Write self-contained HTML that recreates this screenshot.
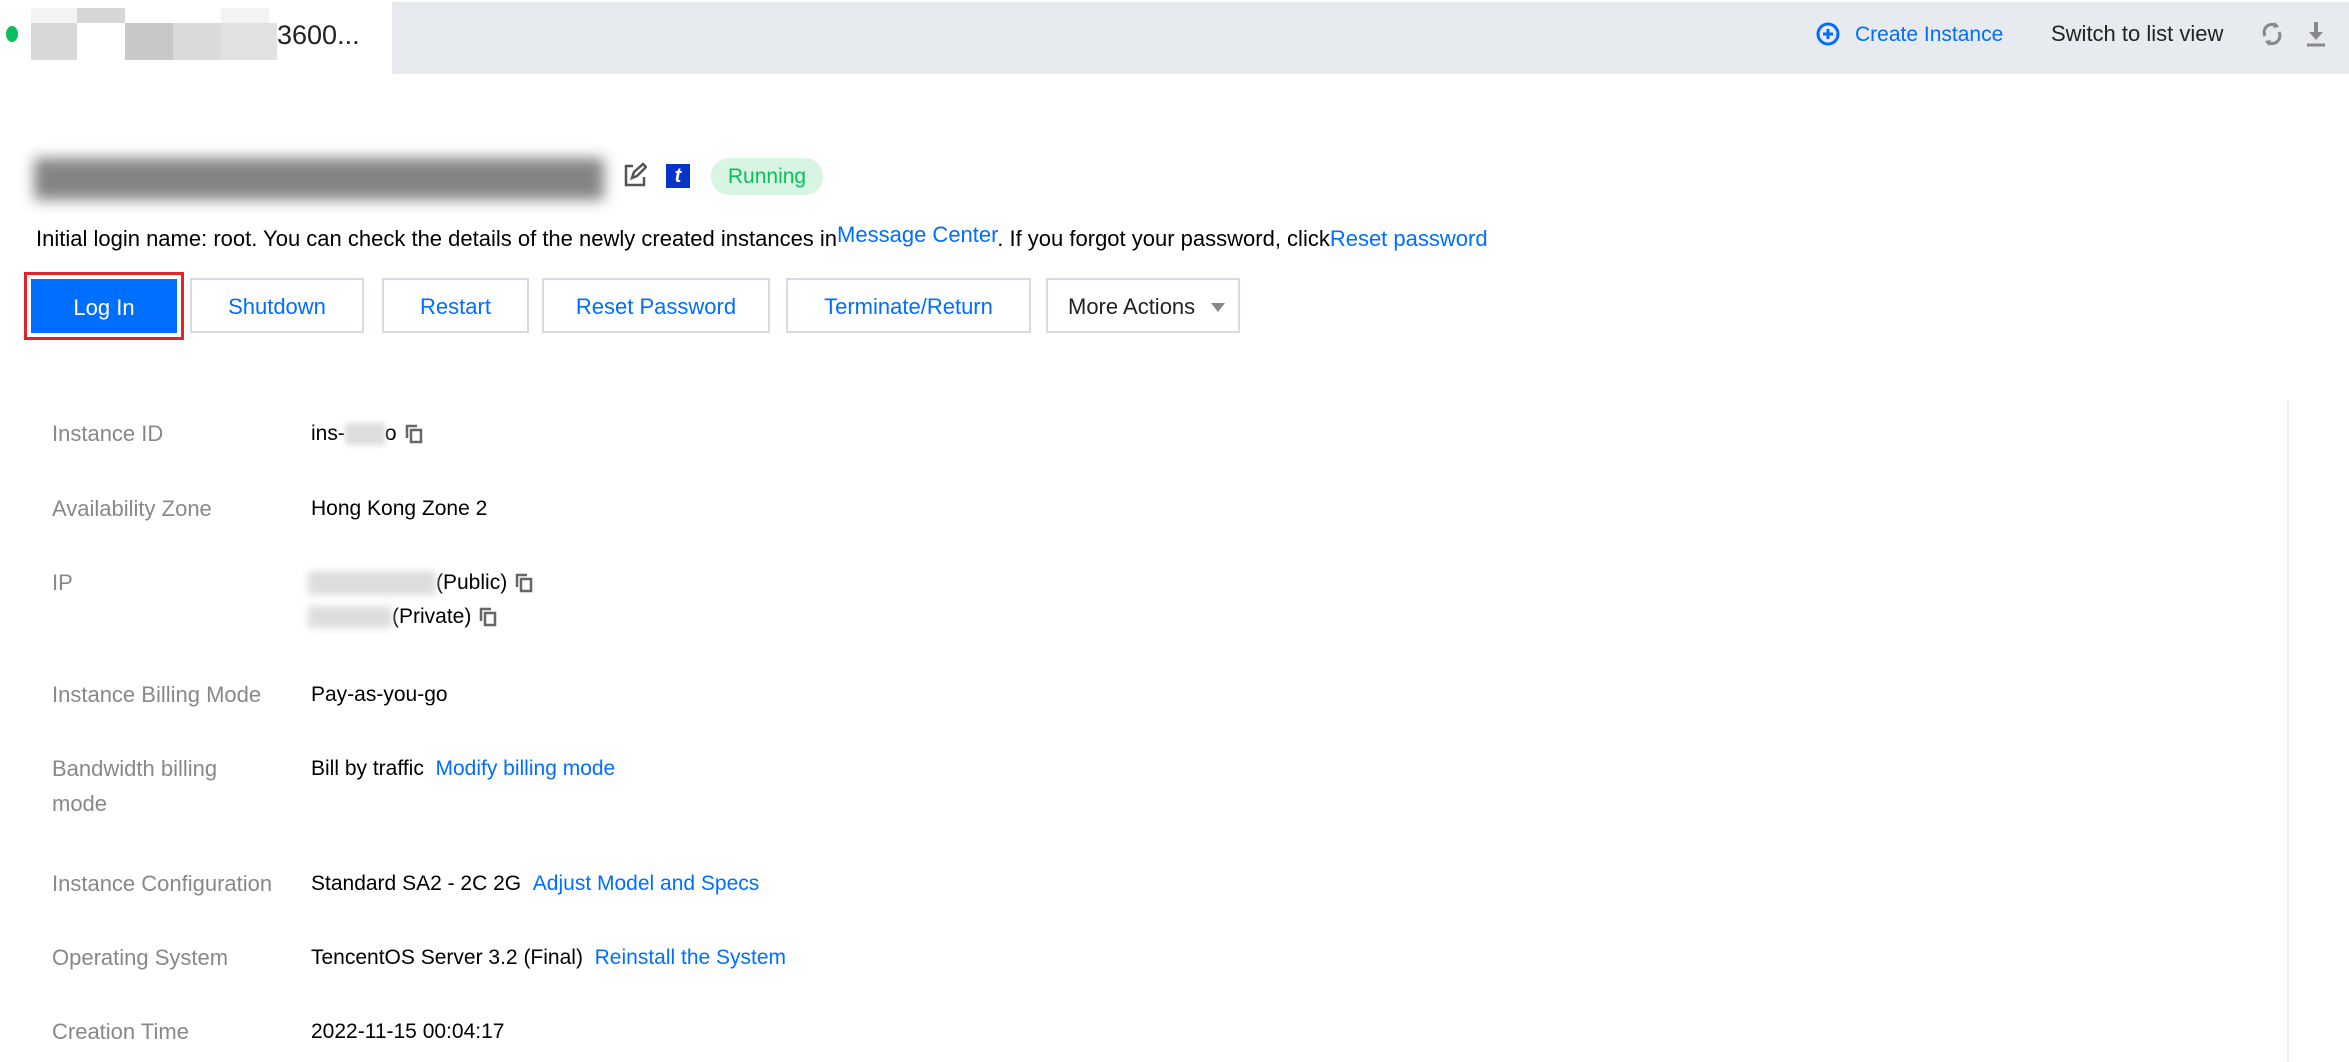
<!DOCTYPE html>
<html><head><meta charset="utf-8"><style>
*{margin:0;padding:0;box-sizing:border-box}
body{width:2349px;height:1062px;background:#fff;font-family:"Liberation Sans","Noto Sans CJK SC",sans-serif;position:relative;overflow:hidden;color:#000}
.a{position:absolute;white-space:nowrap}
.bar{left:392px;top:2px;right:0;height:72px;background:#e7eaef}
.btn{position:absolute;top:278px;height:55px;border:2px solid #d6dbe3;background:#fff;color:#006eff;font-size:22px;display:flex;align-items:center;justify-content:center;padding-top:3px}
.lab{color:#888;font-size:22px;left:52px}
.val{font-size:21px;left:311px;color:#000}
.lk{color:#006eff}
.cp{display:inline-block;vertical-align:middle;margin-left:8px}
</style></head><body>
<div class="a bar"></div>
<div class="a" style="left:6px;top:26px;width:12px;height:16px;border-radius:50%;background:#0abf5b"></div>
<div class="a" style="left:31px;top:8px;width:46px;height:15px;background:#f3f3f3"></div>
<div class="a" style="left:77px;top:8px;width:48px;height:15px;background:#d6d6d6"></div>
<div class="a" style="left:221px;top:8px;width:48px;height:15px;background:#f3f3f3"></div>
<div class="a" style="left:31px;top:23px;width:46px;height:37px;background:#d8d8d8"></div>
<div class="a" style="left:125px;top:23px;width:48px;height:37px;background:#c8c8c8"></div>
<div class="a" style="left:173px;top:23px;width:48px;height:37px;background:#dadada"></div>
<div class="a" style="left:221px;top:23px;width:56px;height:37px;background:#e2e2e2"></div>
<div class="a" style="left:277px;top:20px;font-size:27px;color:#222">3600...</div>
<svg class="a" style="left:1816px;top:22px" width="24" height="24" viewBox="0 0 24 24"><circle cx="12" cy="12" r="10" fill="none" stroke="#006eff" stroke-width="3"/><path d="M12 7v10M7 12h10" stroke="#006eff" stroke-width="3"/></svg>
<div class="a" style="left:1855px;top:23px;font-size:21px;color:#006eff">Create Instance</div>
<div class="a" style="left:2051px;top:21px;font-size:22px;color:#222">Switch to list view</div>
<svg class="a" style="left:2260px;top:20px" width="24" height="28" viewBox="0 0 24 28"><path d="M5 16a8 8 0 0 1 12-10M19 12a8 8 0 0 1-12 10" fill="none" stroke="#888" stroke-width="3"/><path d="M15 2l4 5-6 1zM9 26l-4-5 6-1z" fill="#888"/></svg>
<svg class="a" style="left:2305px;top:20px" width="22" height="28" viewBox="0 0 22 28"><path d="M11 2v14" stroke="#888" stroke-width="4"/><path d="M4 12l7 8 7-8z" fill="#888"/><path d="M2 25h18" stroke="#888" stroke-width="3"/></svg>
<div class="a" style="left:34px;top:158px;width:570px;height:42px;background:#666;filter:blur(7px);opacity:.8"></div>
<svg class="a" style="left:623px;top:162px" width="24" height="26" viewBox="0 0 24 26"><path d="M10 4H3v19h18v-8" fill="none" stroke="#555" stroke-width="2.5"/><path d="M9 16l2-6 9-8 3 3-9 9z" fill="none" stroke="#555" stroke-width="2.5"/></svg>
<div class="a" style="left:666px;top:164px;width:24px;height:24px;background:#0a33c8;color:#fff;font-style:italic;font-weight:bold;font-size:20px;text-align:center;line-height:24px">t</div>
<div class="a" style="left:711px;top:158px;width:112px;height:37px;border-radius:18px;background:#d7f5e2;color:#0abf5b;font-size:21px;text-align:center;line-height:37px">Running</div>
<div class="a" style="left:36px;top:226px;font-size:22px">Initial login name: root. You can check the details of the newly created instances in<span class="lk" style="position:relative;top:-4px">Message Center</span>. If you forgot your password, click<span class="lk">Reset password</span></div>
<div class="a" style="left:24px;top:272px;width:160px;height:68px;border:3px solid #e1242a"></div>
<div class="btn" style="left:31px;width:146px;background:#006eff;border-color:#006eff;color:#fff;top:279px;height:54px">Log In</div>
<div class="btn" style="left:190px;width:174px">Shutdown</div>
<div class="btn" style="left:382px;width:147px">Restart</div>
<div class="btn" style="left:542px;width:228px">Reset Password</div>
<div class="btn" style="left:786px;width:245px">Terminate/Return</div>
<div class="btn" style="left:1046px;width:194px;color:#222;justify-content:flex-start;padding-left:20px">More Actions<span style="margin-left:16px;border:7px solid transparent;border-top:9px solid #888;margin-top:8px"></span></div>
<div class="a" style="left:2287px;top:400px;width:2px;height:662px;background:#eee"></div>
<div class="a lab" style="top:421px">Instance ID</div>
<div class="a val" style="top:422px">ins-<span style="display:inline-block;width:40px;height:22px;background:#ddd;filter:blur(3px);vertical-align:middle"></span>o<svg class="cp" width="18" height="20" viewBox="0 0 18 20"><path d="M2 14V2h10" fill="none" stroke="#666" stroke-width="2.5"/><rect x="6" y="6" width="10" height="12" fill="none" stroke="#666" stroke-width="2.5"/></svg></div>
<div class="a lab" style="top:496px">Availability Zone</div><div class="a val" style="top:497px">Hong Kong Zone 2</div>
<div class="a lab" style="top:570px">IP</div>
<div class="a val" style="top:571px;left:308px"><span style="display:inline-block;width:128px;height:24px;background:#ddd;filter:blur(4px);vertical-align:middle"></span>(Public)<svg class="cp" width="18" height="20" viewBox="0 0 18 20"><path d="M2 14V2h10" fill="none" stroke="#666" stroke-width="2.5"/><rect x="6" y="6" width="10" height="12" fill="none" stroke="#666" stroke-width="2.5"/></svg></div>
<div class="a val" style="top:605px;left:308px"><span style="display:inline-block;width:84px;height:22px;background:#ddd;filter:blur(4px);vertical-align:middle"></span>(Private)<svg class="cp" width="18" height="20" viewBox="0 0 18 20"><path d="M2 14V2h10" fill="none" stroke="#666" stroke-width="2.5"/><rect x="6" y="6" width="10" height="12" fill="none" stroke="#666" stroke-width="2.5"/></svg></div>
<div class="a lab" style="top:682px">Instance Billing Mode</div><div class="a val" style="top:683px">Pay-as-you-go</div>
<div class="a lab" style="top:756px">Bandwidth billing</div><div class="a lab" style="top:791px">mode</div>
<div class="a val" style="top:757px">Bill by traffic&nbsp;&nbsp;<span class="lk">Modify billing mode</span></div>
<div class="a lab" style="top:871px">Instance Configuration</div><div class="a val" style="top:872px">Standard SA2 - 2C 2G&nbsp;&nbsp;<span class="lk">Adjust Model and Specs</span></div>
<div class="a lab" style="top:945px">Operating System</div><div class="a val" style="top:946px">TencentOS Server 3.2 (Final)&nbsp;&nbsp;<span class="lk">Reinstall the System</span></div>
<div class="a lab" style="top:1019px">Creation Time</div><div class="a val" style="top:1020px">2022-11-15 00:04:17</div>
</body></html>
